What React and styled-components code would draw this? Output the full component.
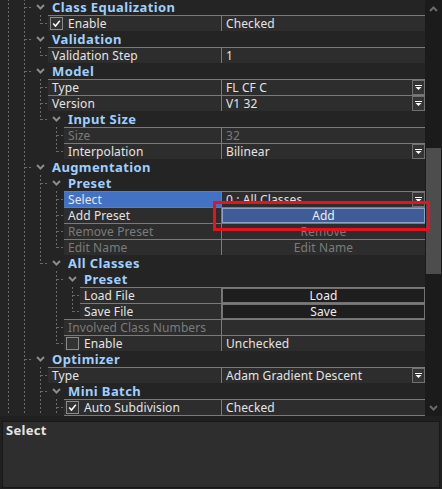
import React from 'react';
import styled, { createGlobalStyle } from 'styled-components';

const GlobalStyle = createGlobalStyle`
  * { box-sizing: border-box; }
  html, body { margin: 0; padding: 0; background: #202020; }
  body {
    font-family: "Noto Sans", "Noto Sans CJK KR", sans-serif;
    font-size: 12px;
    color: #e4e4e4;
  }
`;

const dash = '#6b6b6b';
const vFull = `repeating-linear-gradient(to bottom, ${dash} 0 2px, transparent 2px 4px) 8px 0 / 1px 16px no-repeat`;
const vHalf = `repeating-linear-gradient(to bottom, ${dash} 0 2px, transparent 2px 4px) 8px 0 / 1px 9px no-repeat`;
const tick = `repeating-linear-gradient(to right, ${dash} 0 2px, transparent 2px 4px) 9px 8px / 6px 1px no-repeat`;

const guideBg = {
  line: vFull,
  tee: `${tick}, ${vFull}`,
  elbow: `${tick}, ${vHalf}`,
  none: 'none',
};

const Window = styled.div`
  position: relative;
  width: 442px;
  height: 489px;
  display: flex;
  flex-direction: column;
  background: #202020;
  overflow: hidden;
`;

const GridArea = styled.div`
  display: flex;
  height: 416px;
`;

const Viewport = styled.div`
  flex: 1;
  overflow: hidden;
  background: #242424;
`;

const List = styled.div`
  margin-top: -1px;
`;

const Row = styled.div`
  display: flex;
  height: ${p => (p.$last ? 17 : 16)}px;
`;

const Guide = styled.span`
  flex: 0 0 16px;
  height: 16px;
  background: ${p => guideBg[p.$kind]};
`;

const Chevron = styled.span`
  flex: 0 0 16px;
  padding: 5px 0 0 4px;
  svg { display: block; }
`;

const GroupLabel = styled.span`
  padding-left: 4px;
  font-weight: 700;
  font-size: 13px;
  letter-spacing: 0.4px;
  color: #9fcfff;
  line-height: 16px;
  white-space: nowrap;
`;

const cellBorder = '#7a7a7a';

const NameCell = styled.div`
  flex: 1;
  min-width: 0;
  display: flex;
  align-items: center;
  gap: 5px;
  padding-left: ${p => (p.$check ? 2 : 4)}px;
  background: ${p => (p.$selected ? '#4372c4' : '#2d2d2d')};
  color: ${p => (p.$disabled ? '#7b7b7b' : '#e4e4e4')};
  border-top: 1px solid ${cellBorder};
  border-bottom: ${p => (p.$last ? `1px solid ${cellBorder}` : 'none')};
  line-height: 15px;
  letter-spacing: 0.1px;
  white-space: nowrap;
  overflow: hidden;
`;

const ValueCell = styled.div`
  flex: 0 0 204px;
  display: flex;
  align-items: center;
  padding-left: ${p => (p.$flush ? 0 : 4)}px;
  background: #2d2d2d;
  color: ${p => (p.$disabled ? '#7b7b7b' : '#e4e4e4')};
  border-top: 1px solid ${cellBorder};
  border-left: 1px solid ${cellBorder};
  border-bottom: ${p => (p.$last ? `1px solid ${cellBorder}` : 'none')};
  line-height: 15px;
  letter-spacing: 0.1px;
  white-space: nowrap;
`;

const ValueText = styled.span`
  flex: 1;
  overflow: hidden;
`;

const DropButton = styled.span`
  flex: 0 0 13px;
  height: 15px;
  display: flex;
  align-items: center;
  justify-content: center;
  border: 1px solid #707070;
  background: #353535;
`;

const ActionButton = styled.div`
  flex: 1;
  height: 15px;
  display: flex;
  align-items: center;
  justify-content: center;
  border: 1px solid ${p => (p.$primary ? '#8ea2c8' : '#727272')};
  background: ${p => (p.$primary ? '#3e5c98' : '#1e1e1e')};
  color: #eeeeee;
`;

const ActionText = styled.div`
  flex: 1;
  text-align: center;
  color: #7b7b7b;
`;

const Box = styled.span`
  flex: 0 0 13px;
  height: 13px;
  display: flex;
  align-items: center;
  justify-content: center;
  border: 1px solid #8a8a8a;
  background: #333333;
`;

const VScroll = styled.div`
  flex: 0 0 17px;
  display: flex;
  flex-direction: column;
  background: #1b1b1b;
`;

const ArrowBtn = styled.div`
  height: 17px;
  display: flex;
  align-items: center;
  justify-content: center;
`;

const Track = styled.div`
  flex: 1;
  padding: 131px 1px 0;
`;

const Thumb = styled.div`
  height: 126px;
  background: #4d4d4d;
`;

const Splitter = styled.div`
  height: 5px;
  background: #202020;
`;

const HelpPanel = styled.div`
  flex: 1;
  margin: 0 2px 1px;
  padding: 0 3px;
  border: 1px solid #181818;
  background: #2e2e2e;
`;

const HelpTitle = styled.div`
  font-weight: 700;
  font-size: 13px;
  letter-spacing: 0.3px;
  line-height: 16px;
  color: #e4e4e4;
`;

const Highlight = styled.div`
  position: absolute;
  left: 213px;
  top: 201px;
  width: 217px;
  height: 30px;
  border: 3px solid #e8111d;
  pointer-events: none;
`;

const ChevronDown = ({ color = '#8a8a8a' }) => (
  <svg width="9" height="6" viewBox="0 0 9 6">
    <polyline points="1,1 4.5,4.5 8,1" fill="none" stroke={color} strokeWidth="2" />
  </svg>
);

const ChevronUp = ({ color = '#6a6a6a' }) => (
  <svg width="9" height="6" viewBox="0 0 9 6">
    <polyline points="1,5 4.5,1.5 8,5" fill="none" stroke={color} strokeWidth="2" />
  </svg>
);

const DropGlyph = () => (
  <svg width="7" height="6" viewBox="0 0 7 6">
    <rect x="0" y="0" width="7" height="1" fill="#fff" />
    <polygon points="0.5,2 6.5,2 3.5,5" fill="#fff" />
  </svg>
);

const Check = () => (
  <svg width="9" height="9" viewBox="0 0 9 9">
    <polyline points="1.2,4.6 3.5,7 7.8,1.8" fill="none" stroke="#fff" strokeWidth="1.5" />
  </svg>
);

const rows = [
  { group: 'Class Equalization', g: ['line', 'tee'] },
  { name: 'Enable', g: ['line', 'line', 'elbow'], check: true, value: 'Checked' },
  { group: 'Validation', g: ['line', 'tee'] },
  { name: 'Validation Step', g: ['line', 'line', 'elbow'], value: '1' },
  { group: 'Model', g: ['line', 'tee'] },
  { name: 'Type', g: ['line', 'line', 'tee'], value: 'FL CF C', drop: true },
  { name: 'Version', g: ['line', 'line', 'tee'], value: 'V1 32', drop: true },
  { group: 'Input Size', g: ['line', 'line', 'elbow'] },
  { name: 'Size', g: ['line', 'line', 'none', 'tee'], value: '32', disabled: true },
  { name: 'Interpolation', g: ['line', 'line', 'none', 'elbow'], value: 'Bilinear', drop: true },
  { group: 'Augmentation', g: ['line', 'tee'] },
  { group: 'Preset', g: ['line', 'line', 'tee'] },
  { name: 'Select', g: ['line', 'line', 'line', 'tee'], value: '0 : All Classes', drop: true, selected: true },
  { name: 'Add Preset', g: ['line', 'line', 'line', 'tee'], button: 'Add', primary: true },
  { name: 'Remove Preset', g: ['line', 'line', 'line', 'tee'], action: 'Remove', disabled: true },
  { name: 'Edit Name', g: ['line', 'line', 'line', 'elbow'], action: 'Edit Name', disabled: true },
  { group: 'All Classes', g: ['line', 'line', 'elbow'] },
  { group: 'Preset', g: ['line', 'line', 'none', 'tee'] },
  { name: 'Load File', g: ['line', 'line', 'none', 'line', 'tee'], button: 'Load' },
  { name: 'Save File', g: ['line', 'line', 'none', 'line', 'elbow'], button: 'Save' },
  { name: 'Involved Class Numbers', g: ['line', 'line', 'none', 'tee'], value: '', disabled: true },
  { name: 'Enable', g: ['line', 'line', 'none', 'elbow'], check: false, value: 'Unchecked' },
  { group: 'Optimizer', g: ['line', 'tee'] },
  { name: 'Type', g: ['line', 'line', 'tee'], value: 'Adam Gradient Descent', drop: true },
  { group: 'Mini Batch', g: ['line', 'line', 'tee'] },
  { name: 'Auto Subdivision', g: ['line', 'line', 'line', 'tee'], check: true, value: 'Checked' },
];

const Value = ({ row, last }) => {
  if (row.button) {
    return (
      <ValueCell $flush $last={last}>
        <ActionButton $primary={row.primary}>{row.button}</ActionButton>
      </ValueCell>
    );
  }
  if (row.action) {
    return (
      <ValueCell $flush $last={last}>
        <ActionText>{row.action}</ActionText>
      </ValueCell>
    );
  }
  return (
    <ValueCell $disabled={row.disabled} $last={last}>
      <ValueText>{row.value}</ValueText>
      {row.drop && (
        <DropButton>
          <DropGlyph />
        </DropButton>
      )}
    </ValueCell>
  );
};

const TreeRow = ({ row, last }) => (
  <Row $last={last}>
    {row.g.map((kind, i) => (
      <Guide key={i} $kind={kind} />
    ))}
    {row.group ? (
      <>
        <Chevron>
          <ChevronDown />
        </Chevron>
        <GroupLabel>{row.group}</GroupLabel>
      </>
    ) : (
      <>
        <NameCell
          $check={row.check !== undefined}
          $selected={row.selected}
          $disabled={row.disabled}
          $last={last}
        >
          {row.check !== undefined && <Box>{row.check && <Check />}</Box>}
          <span>{row.name}</span>
        </NameCell>
        <Value row={row} last={last} />
      </>
    )}
  </Row>
);

export default function App() {
  return (
    <>
      <GlobalStyle />
      <Window>
        <GridArea>
          <Viewport>
            <List>
              {rows.map((row, i) => (
                <TreeRow key={i} row={row} last={i === rows.length - 1} />
              ))}
            </List>
          </Viewport>
          <VScroll>
            <ArrowBtn>
              <ChevronUp />
            </ArrowBtn>
            <Track>
              <Thumb />
            </Track>
            <ArrowBtn>
              <ChevronDown color="#6a6a6a" />
            </ArrowBtn>
          </VScroll>
        </GridArea>
        <Splitter />
        <HelpPanel>
          <HelpTitle>Select</HelpTitle>
        </HelpPanel>
        <Highlight />
      </Window>
    </>
  );
}
